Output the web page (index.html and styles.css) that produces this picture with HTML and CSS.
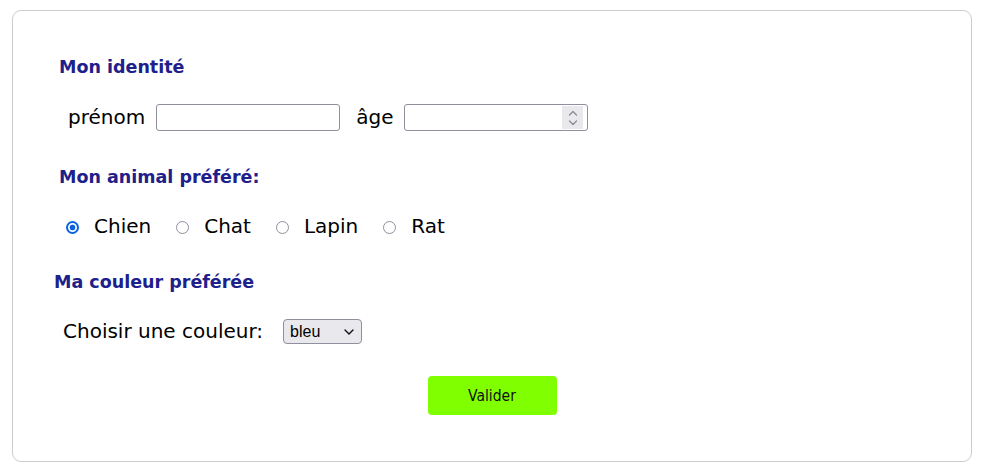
FILE: index.html
```html
<!DOCTYPE html>
<html lang="fr">
<head>
<meta charset="utf-8">
<title>Formulaire</title>
<link rel="stylesheet" href="styles.css">
</head>
<body>
<form class="card">
  <h2 class="title">Mon identité</h2>
  <div class="row identity">
    <label class="lbl" for="prenom">prénom</label>
    <input class="field" id="prenom" type="text">
    <label class="lbl age-lbl" for="age">âge</label>
    <span class="num-wrap">
      <input class="field" id="age" type="number">
      <span class="spin" aria-hidden="true">
        <svg width="10" height="18" viewBox="0 0 10 18"><path d="M1.5 6 L5 2.5 L8.5 6 M1.5 12 L5 15.5 L8.5 12" fill="none" stroke="#8a8a96" stroke-width="1.3" stroke-linecap="round" stroke-linejoin="round"/></svg>
      </span>
    </span>
  </div>

  <h2 class="title">Mon animal préféré:</h2>
  <div class="row radios">
    <label class="opt"><input type="radio" name="animal" value="chien" checked><span>Chien</span></label>
    <label class="opt"><input type="radio" name="animal" value="chat"><span>Chat</span></label>
    <label class="opt"><input type="radio" name="animal" value="lapin"><span>Lapin</span></label>
    <label class="opt"><input type="radio" name="animal" value="rat"><span>Rat</span></label>
  </div>

  <h2 class="title couleur">Ma couleur préférée</h2>
  <div class="row color-row">
    <label class="lbl" for="couleur">Choisir une couleur:</label>
    <span class="sel-wrap">
      <select id="couleur" class="sel">
        <option>bleu</option>
        <option>rouge</option>
        <option>vert</option>
      </select>
      <svg class="chev" width="10" height="6" viewBox="0 0 10 6" aria-hidden="true"><path d="M1 1 L5 5 L9 1" fill="none" stroke="#111" stroke-width="1.4" stroke-linecap="round" stroke-linejoin="round"/></svg>
    </span>
  </div>

  <div class="actions">
    <button type="submit" class="btn">Valider</button>
  </div>
</form>
</body>
</html>
```

FILE: styles.css
```css
html, body {
  margin: 0;
  padding: 0;
  background: #fff;
}

body {
  font-family: "DejaVu Sans", Verdana, sans-serif;
  color: #000;
}

.card {
  box-sizing: border-box;
  width: 960px;
  height: 452px;
  margin: 10px 0 0 12px;
  border: 1px solid #cccccc;
  border-radius: 9px;
  padding: 45px 46px 0 46px;
  display: flex;
  flex-direction: column;
  align-items: flex-start;
}

.title {
  margin: 0;
  font-size: 17.5px;
  line-height: 22px;
  font-weight: bold;
  color: #20208a;
}

.title.couleur {
  margin-left: -5px;
  margin-top: 31px;
}

.row {
  display: flex;
  align-items: center;
  height: 27px;
  font-size: 20px;
  line-height: 27px;
}

.identity {
  margin-top: 26px;
  margin-bottom: 35px;
  padding-left: 9px;
}

.lbl {
  white-space: nowrap;
}

.field {
  box-sizing: border-box;
  width: 184px;
  height: 27px;
  margin: 0 0 0 11px;
  border: 1px solid #8f8f9d;
  border-radius: 3px;
  background: #fff;
  font: 15px "Liberation Sans", Arial, sans-serif;
  padding: 0 4px;
}

.age-lbl {
  margin-left: 16px;
}

.num-wrap {
  position: relative;
  display: inline-flex;
}

#age {
  -moz-appearance: textfield;
}

#age::-webkit-inner-spin-button,
#age::-webkit-outer-spin-button {
  -webkit-appearance: none;
  margin: 0;
}

.spin {
  position: absolute;
  right: 5px;
  top: 2px;
  width: 21px;
  height: 23px;
  background: #e9e9ed;
  display: flex;
  align-items: center;
  justify-content: center;
}

.radios {
  margin-top: 25px;
  padding-left: 7px;
}

.opt {
  display: inline-flex;
  align-items: center;
  margin-right: 25px;
}

.opt input {
  -webkit-appearance: none;
  appearance: none;
  box-sizing: border-box;
  width: 13px;
  height: 13px;
  margin: 1px 15px 0 0;
  border: 1.5px solid #8f8f9d;
  border-radius: 50%;
  background: #fff;
}

.opt input:checked {
  border: 2px solid #0b63e2;
  background: radial-gradient(circle, #0b63e2 0 2.6px, #fff 3.2px);
}

.color-row {
  margin-top: 25px;
  padding-left: 4px;
}

.sel-wrap {
  position: relative;
  display: inline-flex;
  margin-left: 20px;
}

.sel {
  -webkit-appearance: none;
  appearance: none;
  box-sizing: border-box;
  width: 79px;
  height: 25px;
  border: 1px solid #8f8f9d;
  border-radius: 4px;
  background: #e9e9ed;
  color: #000;
  font: 16px "Liberation Sans", Arial, sans-serif;
  padding: 0 0 0 6px;
}

.chev {
  position: absolute;
  right: 8px;
  top: 10px;
  pointer-events: none;
}

.actions {
  align-self: stretch;
  display: flex;
  justify-content: center;
  margin-top: 31px;
}

.btn {
  width: 129px;
  height: 39px;
  border: none;
  border-radius: 4px;
  background: #80ff00;
  color: #111;
  font: 15.5px "DejaVu Sans Condensed", "DejaVu Sans", sans-serif;
  font-stretch: condensed;
  padding: 0;
}
```
